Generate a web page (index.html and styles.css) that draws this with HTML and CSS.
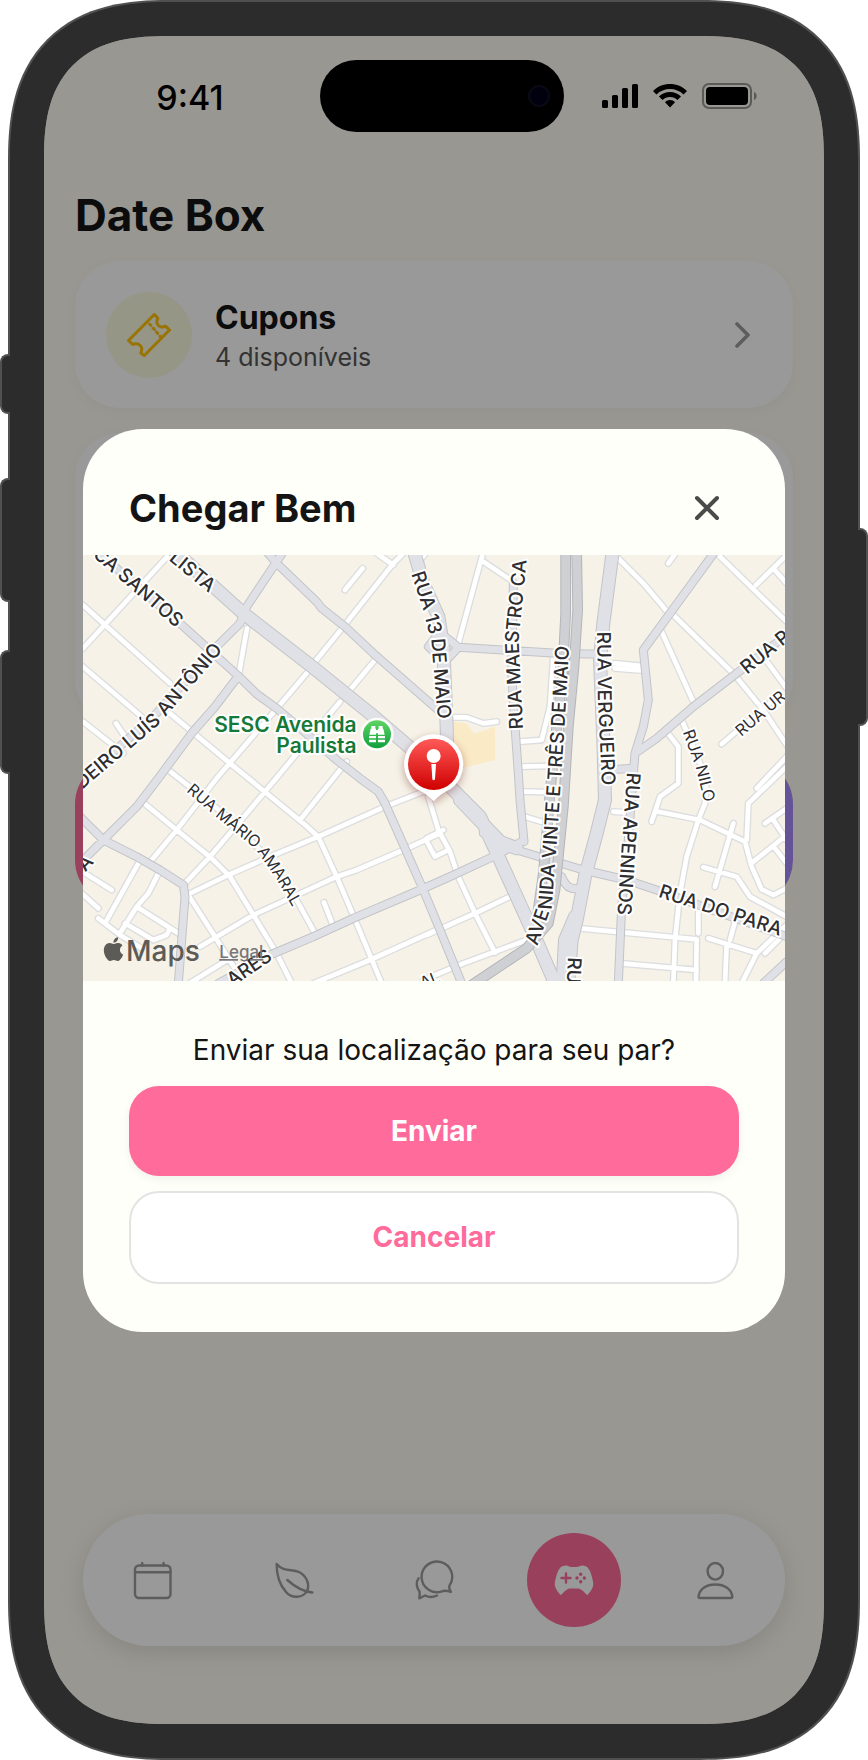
FILE: index.html
```html
<!DOCTYPE html>
<html lang="pt-BR">
<head>
  <meta charset="UTF-8" />
  <meta name="viewport" content="width=device-width, initial-scale=1.0"/>
  <title>Date Box</title>
  <link rel="stylesheet" href="styles.css">
</head>
<body>
  <div class="device">
    <span class="side-btn action"></span>
    <span class="side-btn vol-up"></span>
    <span class="side-btn vol-down"></span>
    <span class="side-btn power"></span>

    <div class="screen">
      <div class="status-bar">
        <span class="time">9:41</span>
        <div class="island"><span class="camera"></span></div>
        <div class="status-icons">
          <svg width="36" height="26" viewBox="0 0 36 26">
            <rect x="0" y="17" width="6" height="8" rx="1.5"/>
            <rect x="10" y="12" width="6" height="13" rx="1.5"/>
            <rect x="20" y="5" width="6" height="20" rx="1.5"/>
            <rect x="30" y="1" width="6" height="24" rx="1.5"/>
          </svg>
          <svg width="34" height="26" viewBox="0 0 34 26">
            <path d="M17 1C10.500 1 4.500 3.500 0 8l3.500 3.600C7.200 8 11.800 6.100 17 6.100s9.800 1.900 13.500 5.500L34 8C29.500 3.500 23.500 1 17 1z"/>
            <path d="M17 9C12.700 9 9 10.600 6 13.500l3.500 3.500c2-2 4.600-3.100 7.500-3.100s5.500 1.100 7.500 3.100l3.500-3.500C25 10.600 21.300 9 17 9z"/>
            <path d="M17 17c-2 0-3.700.8-5 2.200l5 5.300 5-5.300c-1.300-1.400-3-2.200-5-2.200z"/>
          </svg>
          <svg width="55" height="26" viewBox="0 0 55 26">
            <rect x="1" y="1" width="48" height="24" rx="6" fill="none" stroke="#000" stroke-opacity=".4" stroke-width="2"/>
            <rect x="4" y="4" width="42" height="18" rx="4"/>
            <path d="M52 9v8c3.500-1 3.500-7 0-8z" fill-opacity=".4"/>
          </svg>
        </div>
      </div>

      <main class="content">
        <h1>Date Box</h1>
        <a href="#cupons" class="card coupon">
          <span class="coupon-icon">
            <svg width="44" height="44" viewBox="0 0 44 44" fill="none" stroke="currentColor" stroke-width="3" stroke-linejoin="round" stroke-linecap="round">
              <path d="M27.300 1.500L1.500 27.500l4.300 4c6-2.500 11 2.500 8 8.500l3.500 2.500L42.500 17l-3.800-3.800c-6 2.800-11-2-7.800-8z"/>
              <path d="M22.500 11l1.200 1.200M26 15l1.500 1.500M29.500 19l1.200 1.400M33 23.200l.6.700"/>
            </svg>
          </span>
          <span class="coupon-text">
            <strong>Cupons</strong>
            <span>4 disponíveis</span>
          </span>
          <svg class="chevron" width="16" height="26" viewBox="0 0 16 26" fill="none" stroke="currentColor" stroke-width="3.600" stroke-linecap="round" stroke-linejoin="round">
            <path d="M2 2l11 11L2 24"/>
          </svg>
        </a>
        <div class="card feature"></div>
        <div class="tiles">
          <div class="tile pink"></div>
          <div class="tile purple"></div>
        </div>
      </main>

      <nav class="tab-bar">
        <a href="#agenda" aria-label="Agenda">
          <svg width="40" height="40" viewBox="0 0 40 40">
            <rect x="2" y="5.500" width="35.500" height="32.500" rx="4"/>
            <path d="M2 12.200h35.500M9.200 3v2.500M30.600 3v2.500"/>
          </svg>
        </a>
        <a href="#natureza" aria-label="Natureza">
          <svg width="40" height="40" viewBox="0 0 40 40">
            <path d="M2.700 4C9 12 18 9 25 12c8 4 11 13 8 19-4 7-15 8-21 1C5 24 2.500 14 2.700 4z"/>
            <path d="M13.300 20C20 26 28 31.500 38.400 32.500"/>
          </svg>
        </a>
        <a href="#conversas" aria-label="Conversas">
          <svg width="40" height="40" viewBox="0 0 40 40">
            <path d="M35.600 25.400A15.300 15.300 0 1 0 28 31.300Q31 30 36.800 31.900Q34.500 28 35.600 25.400z"/>
            <path d="M4.600 18.300C1.600 22 2.500 28 5.500 31.500Q6 34 5.300 38.300Q8 37 11 35.500Q17 38.500 23 35.500"/>
          </svg>
        </a>
        <a href="#datebox" class="active" aria-label="Date Box">
          <svg width="40" height="40" viewBox="0 0 40 40">
            <path class="pad" d="M9 6Q13 5 15 6.500Q20 7.500 25 6.500Q28 5 31 6C36 7 39 18 40 29C40 36 34 37 31 33Q27 28.500 24 28.500H16Q13 28.500 9 33C6 37 0 36 0 29C1 18 4 7 9 6z"/>
            <path class="cross" d="M7.500 18h9M12 13.500v9"/>
            <g class="dots"><circle cx="26.700" cy="14.300" r="1.700"/><circle cx="26.700" cy="21.700" r="1.700"/><circle cx="23" cy="18" r="1.700"/><circle cx="30.400" cy="18" r="1.700"/></g>
          </svg>
        </a>
        <a href="#perfil" aria-label="Perfil">
          <svg width="40" height="40" viewBox="0 0 40 40">
            <ellipse cx="20.300" cy="11.300" rx="7.700" ry="8.300"/>
            <path d="M3.500 36.500C4.500 29 11 24.500 20.300 24.500S36.500 29 37.300 36.500Q37.300 38 36 38H5Q3.300 38 3.500 36.500z"/>
          </svg>
        </a>
      </nav>

      <div class="overlay">
        <div class="modal" role="dialog" aria-labelledby="modalTitle">
          <div class="modal-header">
            <h2 id="modalTitle">Chegar Bem</h2>
            <button type="button" class="close-btn" aria-label="Fechar">
              <svg width="26" height="26" viewBox="0 0 26 26" fill="none" stroke="currentColor" stroke-width="4" stroke-linecap="round"><path d="M3 3l20 20M23 3L3 23"/></svg>
            </button>
          </div>

          <svg class="map" viewBox="39 45 2106 1278">
            <defs>
              <!-- small streets -->
              <path id="streets" d="M39 195L300 430M39 325L310 30M39 380L215 530M39 545L160 640M138 550L175 605M300 520L480 670L700 850L745 890L800 1010L860 1150L935 1330M531 265L507 400M710 400L625 500L440 715L320 870L245 960M1005 35L970 70L820 260L735 365M920 40L970 75M1055 55L1070 35M878 85L825 150M915 360L840 450M810 485L760 545L585 755L420 950L345 1030M830 665L690 840
                M295 690L460 820L600 960L680 1080L735 1180M220 788L320 870L425 955L480 1010L550 1125L620 1240L665 1330M350 1065L475 1005L600 950L745 890L945 800L1060 755M390 1220L550 1125L800 1010L860 990L1000 930L1110 880M355 1065L435 1190L510 1310M350 1335L480 1255M730 1330L900 1260L1110 1165M205 970L105 1150M265 1000L235 1060L200 1100L150 1180M200 1100L325 1180M85 1135L150 1185L215 1225M165 1150L250 1200L290 1185L300 1165M30 990L125 1050M30 1055L85 1105M762 1087L790 1160
                M1075 770L1105 870L1140 935L1165 1010L1220 1130L1275 1238M1068 900L1095 950L1135 930M1070 895L1120 870M1070 1185L1215 1120L1320 1070M1060 1320L1180 1270L1275 1235L1370 1200
                M1240 35L1165 310M1240 65L1330 125M1450 350L1440 500L1415 600L1350 605M1355 680L1430 678M1360 755L1425 756M1365 830L1415 845M1150 532L1190 532L1240 550L1280 545M1635 45L1720 130L1800 225L1810 225L1990 400L2080 510L2150 615M1795 70L1820 35M1945 45L2150 245M2058 135L2150 45M2110 85L2150 130M1775 275L1872 490M2080 350L2150 445M1635 370L1720 378M1635 385L1720 392M1955 612L2110 480M1835 540L1870 620L1910 720L1905 790L1885 840L1850 950L1830 1060L1815 1200L1810 1330M1790 575L1825 620L1825 730L1770 770L1745 845M1765 815L1890 840L2025 905L2045 980L2075 1048L2110 1065L2150 1045M2030 900L2035 790L2150 680M2060 745L2150 650M1630 815L1675 818M1990 850L1935 1040M1900 982L2000 1010L2040 1070L2150 1130M2050 965L2150 885M2085 850L2150 805M2110 840L2150 900M2115 925L2150 970M1530 1165L1880 1198L1878 1330M1655 1270L1880 1290M1885 1110L1885 1180M1995 1145L1980 1200M1915 1195L2060 1240M1970 1215L1965 1330M2150 1155L2060 1240L2015 1330M2085 1240L2150 1175"/>
              <!-- avenues -->
              <path id="avenues" d="M60 20L140 85L330 250L430 340L505 408L560 462L620 505L720 590L800 660L870 715L925 755L945 790L1005 925L1060 1050L1110 1170L1175 1330M590 35L620 70L740 185L755 205L825 260L910 340L1110 515L1135 545M640 35L530 200L510 250L440 320L250 530L30 725M505 408L435 500L365 580L265 715L200 800L100 900L30 970M30 830L100 900L200 950L270 990L340 1035L345 1070L335 1200L325 1330
                M445 1330L600 1245L730 1190L850 1135L1050 1050L1140 1010L1280 945L1355 905M1100 270L1165 322L1130 360M1165 322L1460 340L1590 343M1110 275L1075 320L1130 370M1330 130L1325 400L1335 560L1345 700L1350 780L1362 905M1935 35L1800 220L1720 330L1735 480L1720 560L1695 640L1690 700L1675 900L1655 1100L1645 1330M1695 640L1760 595L1870 500L2000 400L2150 285M1610 690L1690 685
                M1240 880L1340 930L1440 960L1540 990L1670 1020L1760 1050L1900 1100L2150 1190M1475 1010Q1490 1052 1525 1045M2080 1330L2150 1265"/>
              <path id="main" d="M310 30L520 220L720 375L900 520L1040 640L1140 740L1230 830L1290 960L1390 1180L1455 1330M1032 35L1060 130L1105 230L1120 320L1130 560L1132 660L1110 740M1628 35L1600 250L1590 360L1600 600L1605 780L1580 880L1545 1010L1520 1140L1505 1200L1495 1330M1515 1130L1485 1200L1478 1330M1170 780L1290 905L1340 925"/>
              <path id="highway" d="M1487 35L1487 220L1478 400L1460 560L1440 760L1420 1000L1400 1140M1520 35L1523 210L1512 380L1495 560L1480 800L1465 950L1455 1050L1435 1150L1370 1225L1190 1345"/>
              <path id="l-santos" d="M-40 -72L332 248"/>
              <path id="l-paulista" d="M150 -87L430 143"/>
              <path id="l-luis" d="M-230 980L40 718L250 540L443 316"/>
              <path id="l-maio" d="M1044 95L1075 190L1105 300L1128 580"/>
              <path id="l-maestro" d="M1338 568L1325 300L1350 50L1360 -200"/>
              <path id="l-vinte" d="M1382 1212L1425 1090L1440 900L1460 600L1480 250"/>
              <path id="l-vergueiro" d="M1602 275L1605 480L1620 800"/>
              <path id="l-apeninos" d="M1692 698L1675 940L1660 1180"/>
              <path id="l-paraiso" d="M1770 1050L2250 1205"/>
              <path id="l-p" d="M2018 388L2300 160"/>
              <path id="l-ur" d="M2002 577L2300 325"/>
              <path id="l-nilo" d="M1855 570L1895 680L1925 800"/>
              <path id="l-mario" d="M360 740L460 825L565 910L630 1000L710 1140"/>
              <path id="l-ares" d="M330 1430L480 1320L598 1240"/>
              <path id="l-al" d="M1000 1350L1200 1270"/>
              <path id="l-ru" d="M1515 1252L1505 1450"/>
              <path id="l-a" d="M-70 1090L58 953"/>
              <linearGradient id="red" x1="0" y1="0" x2="0" y2="1"><stop offset="0" stop-color="#ff5a58"/><stop offset="1" stop-color="#cf0000"/></linearGradient>
              <linearGradient id="green" x1="0" y1="0" x2="0" y2="1"><stop offset="0" stop-color="#5fd564"/><stop offset="1" stop-color="#0f9f3d"/></linearGradient>
            </defs>

            <rect class="land" x="39" y="45" width="2106" height="1278"/>
            <path class="park" d="M1150 545L1190 550L1212 582L1275 560V660L1150 690z"/>
            <use href="#streets" class="street-case"/>
            <use href="#streets" class="street"/>
            <use href="#main" class="main-case"/>
            <use href="#avenues" class="avenue-case"/>
            <use href="#main" class="main-road"/>
            <use href="#avenues" class="avenue"/>
            <use href="#highway" class="highway-case"/>
            <use href="#highway" class="highway"/>

            <g class="labels">
              <text text-anchor="end"><textPath href="#l-santos" startOffset="100%">CA SANTOS</textPath></text>
              <text text-anchor="end"><textPath href="#l-paulista" startOffset="100%">LISTA</textPath></text>
              <text text-anchor="end"><textPath href="#l-luis" startOffset="100%">DEIRO LUÍS ANTÔNIO</textPath></text>
              <text><textPath href="#l-maio">RUA 13 DE MAIO</textPath></text>
              <text><textPath href="#l-maestro">RUA MAESTRO CA</textPath></text>
              <text><textPath href="#l-vinte">AVENIDA VINTE E TRÊS DE MAIO</textPath></text>
              <text><textPath href="#l-vergueiro">RUA VERGUEIRO</textPath></text>
              <text><textPath href="#l-apeninos">RUA APENINOS</textPath></text>
              <text><textPath href="#l-paraiso">RUA DO PARA</textPath></text>
              <text><textPath href="#l-p">RUA P</textPath></text>
              <text text-anchor="end"><textPath href="#l-ares" startOffset="100%">ARES</textPath></text>
              <text><textPath href="#l-ru">RU</textPath></text>
              <text text-anchor="end"><textPath href="#l-a" startOffset="100%">A</textPath></text>
            </g>
            <g class="labels small">
              <text><textPath href="#l-ur">RUA UR</textPath></text>
              <text><textPath href="#l-nilo">RUA NILO</textPath></text>
              <text><textPath href="#l-mario">RUA MÁRIO AMARAL</textPath></text>
              <text><textPath href="#l-al" startOffset="55">AL</textPath></text>
            </g>

            <g class="place">
              <text x="860" y="576">SESC Avenida</text>
              <text x="860" y="640">Paulista</text>
              <circle cx="921" cy="583" r="50" fill="#fff" fill-opacity=".85"/>
              <circle cx="921" cy="583" r="42" fill="url(#green)"/>
              <path d="M904 558h12v8h2v18h-20l4-18h2zM926 558h12v8h2l4 18h-20v-18h2zM897 588h21v7h-21zM924 588h21v7h-21zM897 599h21v8h-21zM924 599h21v8h-21zM918 570h6v10h-6z" fill="#fff"/>
            </g>

            <g class="pin">
              <path d="M1091 583a90 90 0 0 1 38 171Q1112 762 1091 784Q1070 762 1053 754A90 90 0 0 1 1091 583z" fill="#fff"/>
              <circle cx="1091" cy="673" r="77" fill="url(#red)"/>
              <circle cx="1091" cy="648" r="21" fill="#fff"/>
              <path d="M1084 672h14l-3 46q-4 6-8 0z" fill="#fff"/>
            </g>

            <g class="brand">
              <path transform="translate(95 1192) scale(2.950)" d="M12.152 6.896c-.948 0-2.415-1.078-3.960-1.040-2.040.027-3.910 1.183-4.961 3.014-2.117 3.675-.546 9.103 1.519 12.090 1.013 1.454 2.208 3.090 3.792 3.039 1.520-.065 2.090-.987 3.935-.987 1.831 0 2.350.987 3.960.948 1.637-.026 2.676-1.480 3.676-2.948 1.156-1.688 1.636-3.325 1.662-3.415-.039-.013-3.182-1.221-3.220-4.857-.026-3.040 2.480-4.494 2.597-4.559-1.429-2.090-3.623-2.324-4.390-2.376-2-.156-3.675 1.090-4.610 1.090zM15.530 3.830c.843-1.012 1.400-2.427 1.245-3.830-1.207.052-2.662.805-3.532 1.818-.780.896-1.454 2.338-1.273 3.714 1.338.104 2.715-.688 3.559-1.701"/>
              <text class="maps" x="168" y="1262">Maps</text>
              <a href="#legal"><text class="legal" x="448" y="1254">Legal</text></a>
            </g>
          </svg>

          <div class="modal-body">
            <p>Enviar sua localização para seu par?</p>
            <button type="button" class="btn send-btn">Enviar</button>
            <button type="button" class="btn cancel-btn">Cancelar</button>
          </div>
        </div>
      </div>
    </div>
  </div>
</body>
</html>
```
FILE: styles.css
```css
:root {
  --primary-color: #ff6b9b;
  --bg: #fefcf3;
  --text: #141414;
  --muted: #9b9b9b;
  --frame: #2c2c2c;
  --frame-edge: #505050;
}

* {
  margin: 0;
  padding: 0;
  box-sizing: border-box;
  font-family: Inter, 'Liberation Sans', sans-serif;
}

body {
  background-color: white;
}

a {
  color: inherit;
  text-decoration: none;
}

/* phone frame */
.device {
  position: relative;
  display: flex;
  min-height: 100vh;
  margin: 0 8px;
  padding: 34px;
  background-color: var(--frame);
  border: 2px solid var(--frame-edge);
  border-radius: 136px;
}

.side-btn {
  position: absolute;
  width: 10px;
  left: -10px;
  background-color: var(--frame);
  border: 2px solid var(--frame-edge);
  border-right: none;
  border-radius: 8px 0 0 8px;
}

.action {
  top: 352px;
  height: 60px;
}

.vol-up {
  top: 476px;
  height: 124px;
}

.vol-down {
  top: 648px;
  height: 124px;
}

.power {
  top: 526px;
  left: auto;
  right: -10px;
  height: 198px;
  border: 2px solid var(--frame-edge);
  border-left: none;
  border-radius: 0 8px 8px 0;
}

.screen {
  position: relative;
  flex: 1;
  display: flex;
  flex-direction: column;
  overflow: hidden;
  background-color: var(--bg);
  border-radius: 104px;
}

/* smoother corners where the browser has them */
@supports (corner-shape: superellipse(1.3)) {
  .device {
    border-radius: 160px;
    corner-shape: superellipse(1.3);
  }

  .screen {
    border-radius: 126px;
    corner-shape: superellipse(1.4);
  }
}

/* status bar */
.status-bar {
  display: grid;
  grid-template-columns: 1fr 244px 1fr;
  align-items: center;
  padding: 24px 0 0 16px;
}

.time {
  padding-top: 3px;
  text-align: center;
  font-size: 34px;
  font-weight: 500;
}

.island {
  display: flex;
  align-items: center;
  justify-content: flex-end;
  height: 72px;
  padding-right: 14px;
  background-color: black;
  border-radius: 36px;
}

.camera {
  width: 22px;
  height: 22px;
  background-color: #00001a;
  border: 2px solid #101024;
  border-radius: 50%;
}

.status-icons {
  display: flex;
  align-items: center;
  gap: 15px;
  padding-left: 38px;
}

/* page */
.content {
  padding: 57px 31px 0;
}

h1 {
  margin-bottom: 20px;
  font-size: 44px;
  line-height: 52px;
  color: var(--text);
}

.card {
  background-color: white;
  border-radius: 45px;
  box-shadow: 0 3px 12px rgba(0, 0, 0, 0.04);
}

.coupon {
  display: flex;
  align-items: center;
  height: 147px;
  padding: 0 42px 0 31px;
}

.coupon-icon {
  display: flex;
  align-items: center;
  justify-content: center;
  width: 86px;
  height: 86px;
  margin-right: 23px;
  background-color: #fafae0;
  border-radius: 50%;
  color: #ffc107;
}

.coupon-text {
  flex: 1;
  display: flex;
  flex-direction: column;
  padding-top: 4px;
}

.coupon-text strong {
  font-size: 32px;
  line-height: 40px;
  color: var(--text);
}

.coupon-text span {
  font-size: 25px;
  line-height: 38px;
  color: #555;
}

.chevron {
  color: #9b9b9b;
}

.feature {
  height: 291px;
  margin-top: 25px;
}

.tiles {
  display: flex;
  gap: 24px;
  margin-top: 35px;
}

.tile {
  flex: 1;
  height: 146px;
  border-radius: 45px;
}

.pink {
  background-color: var(--primary-color);
}

.purple {
  background-color: #a78bfa;
}

/* tab bar */
.tab-bar {
  display: flex;
  align-items: center;
  height: 132px;
  margin: auto 39px 78px;
  background-color: white;
  border-radius: 66px;
  box-shadow: 0 6px 24px rgba(0, 0, 0, 0.12);
}

.tab-bar a {
  flex: 1;
  display: flex;
  justify-content: center;
  color: var(--muted);
}

.tab-bar svg {
  fill: none;
  stroke: currentColor;
  stroke-width: 2.4;
  stroke-linecap: round;
  stroke-linejoin: round;
}

.tab-bar .active svg {
  box-sizing: content-box;
  padding: 27px;
  background-color: var(--primary-color);
  border-radius: 50%;
  stroke: none;
}

.active .pad {
  fill: white;
}

.tab-bar .active .cross {
  stroke: var(--primary-color);
}

.active .dots {
  fill: var(--primary-color);
}

/* modal */
.overlay {
  position: absolute;
  inset: 0;
  display: flex;
  align-items: center;
  padding: 0 39px;
  background-color: rgba(0, 0, 0, 0.4);
}

.modal {
  width: 100%;
  overflow: hidden;
  background-color: #fffffa;
  border-radius: 60px;
}

.modal-header {
  display: flex;
  align-items: center;
  justify-content: space-between;
  padding: 55px 60px 23px 46px;
}

h2 {
  font-size: 38px;
  line-height: 48px;
  color: var(--text);
}

.close-btn {
  display: flex;
  padding: 5px;
  background: none;
  border: none;
  color: #4a4a4a;
  cursor: pointer;
}

.modal-body {
  display: flex;
  flex-direction: column;
  padding: 51px 46px 48px;
}

.modal-body p {
  margin-bottom: 18px;
  text-align: center;
  font-size: 28px;
  line-height: 36px;
  color: var(--text);
}

.btn {
  height: 90px;
  border: none;
  border-radius: 30px;
  font-size: 28px;
  font-weight: bold;
  cursor: pointer;
}

.send-btn {
  margin-bottom: 15px;
  background-color: var(--primary-color);
  color: white;
  box-shadow: 0 3px 10px rgba(0, 0, 0, 0.06);
}

.cancel-btn {
  height: 93px;
  background-color: white;
  border: 2px solid #e3e3e3;
  color: var(--primary-color);
}

/* map */
.map {
  display: block;
  width: 100%;
}

.map use {
  fill: none;
  stroke-linecap: round;
  stroke-linejoin: round;
}

.land {
  fill: #f6f2e7;
}

.park {
  fill: #fbeac6;
}

.street-case {
  stroke: #dcdddf;
  stroke-width: 22px;
}

.street {
  stroke: white;
  stroke-width: 14px;
}

.avenue-case {
  stroke: #c3c4c8;
  stroke-width: 27px;
}

.avenue {
  stroke: #e0e1e6;
  stroke-width: 21px;
}

.main-case {
  stroke: #c3c4c8;
  stroke-width: 42px;
}

.main-road {
  stroke: #e0e1e6;
  stroke-width: 36px;
}

.highway-case {
  stroke: #b4b5b9;
  stroke-width: 32px;
}

.highway {
  stroke: #cfd0d3;
  stroke-width: 26px;
}

.labels text {
  font-size: 57px;
  font-weight: 500;
  fill: #2e2e30;
  stroke: white;
  stroke-width: 12px;
  stroke-linejoin: round;
  paint-order: stroke;
  dominant-baseline: central;
}

.labels.small text {
  font-size: 48px;
  font-weight: 400;
}

.place text {
  font-size: 63px;
  font-weight: 600;
  text-anchor: end;
  fill: #157a38;
  stroke: white;
  stroke-width: 12px;
  stroke-linejoin: round;
  paint-order: stroke;
}

.pin {
  filter: drop-shadow(0 9px 12px rgba(90, 0, 0, 0.35));
}

.brand {
  fill: #5c5b57;
}

.maps {
  font-size: 84px;
  font-weight: 500;
}

.legal {
  font-size: 51px;
  font-weight: 500;
  fill: #77767a;
  text-decoration: underline;
}
```
